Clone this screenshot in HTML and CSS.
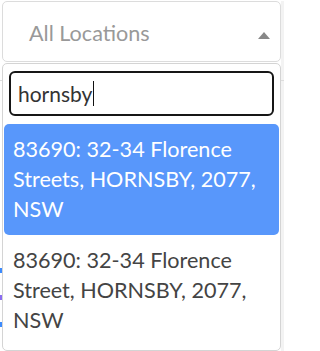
FILE: index.html
```html
<!DOCTYPE html>
<html>
<head>
<meta charset="utf-8">
<link rel="stylesheet" href="styles.css">
</head>
<body>
<div class="page">
  <div class="select">
    <span class="placeholder">All Locations</span>
    <span class="arrow"></span>
  </div>
  <div class="under">
    <div class="under-row"><span class="mark mark-blue"></span></div>
    <div class="under-row"><span class="mark mark-purple"></span></div>
    <div class="under-row"><span class="mark mark-blue"></span></div>
  </div>
  <div class="dropdown">
    <div class="search">
      <span class="search-text">hornsby</span><span class="caret"></span>
    </div>
    <ul class="options">
      <li class="option option-active">83690: 32-34 Florence Streets, HORNSBY, 2077, NSW</li>
      <li class="option">83690: 32-34 Florence Street, HORNSBY, 2077, NSW</li>
    </ul>
  </div>
</div>
</body>
</html>
```

FILE: styles.css
```css
html, body {
  margin: 0;
  padding: 0;
  background: #ffffff;
}
body {
  font-family: Lato, "Open Sans", sans-serif;
  width: 284px;
  height: 351px;
  overflow: hidden;
}
.page {
  position: relative;
  height: 351px;
  background: linear-gradient(to right, #ffffff 0, #ffffff 281px, #f3f3f3 281px);
}
.select {
  margin: 1px 3px 0 2px;
  height: 59px;
  border: 1px solid #dcdcdc;
  border-radius: 5px;
  background: #fff;
  display: flex;
  align-items: center;
  justify-content: space-between;
  padding: 0 10px 0 26px;
}
.placeholder {
  font-size: 21.6px;
  color: #999999;
  margin-top: 2px;
}
.arrow {
  width: 0;
  height: 0;
  border-left: 6px solid transparent;
  border-right: 6px solid transparent;
  border-bottom: 7px solid #888888;
  margin-top: 8px;
}
.under {
  margin-top: 18px;
  border-top: 1px solid #dddddd;
  padding-top: 176px;
  display: flex;
  flex-direction: column;
}
.under-row {
  height: 27px;
  display: flex;
  align-items: center;
}
.mark {
  width: 2px;
  height: 5px;
}
.mark-blue { background: #3d8bfd; }
.mark-purple { background: #8a6cf0; }
.dropdown {
  position: absolute;
  top: 62px;
  left: 2px;
  width: 277px;
  height: 286px;
  border: 1px solid #d4d4d4;
  border-radius: 5px;
  background: #ffffff;
}
.search {
  margin: 7px 6px 0 6px;
  height: 41px;
  border: 2px solid #161616;
  border-radius: 6px;
  display: flex;
  align-items: center;
  padding-left: 7px;
}
.search-text {
  font-size: 21px;
  color: #333333;
}
.caret {
  width: 1px;
  height: 25px;
  background: #111;
  margin-left: 1px;
}
.options {
  list-style: none;
  margin: 8px 1px 0 1px;
  padding: 0;
}
.option {
  font-size: 21.6px;
  line-height: 30px;
  padding: 10px 6px 11px 9px;
  color: #444444;
  border-radius: 5px;
}
.option-active {
  background: #5897fb;
  color: #ffffff;
}
```
